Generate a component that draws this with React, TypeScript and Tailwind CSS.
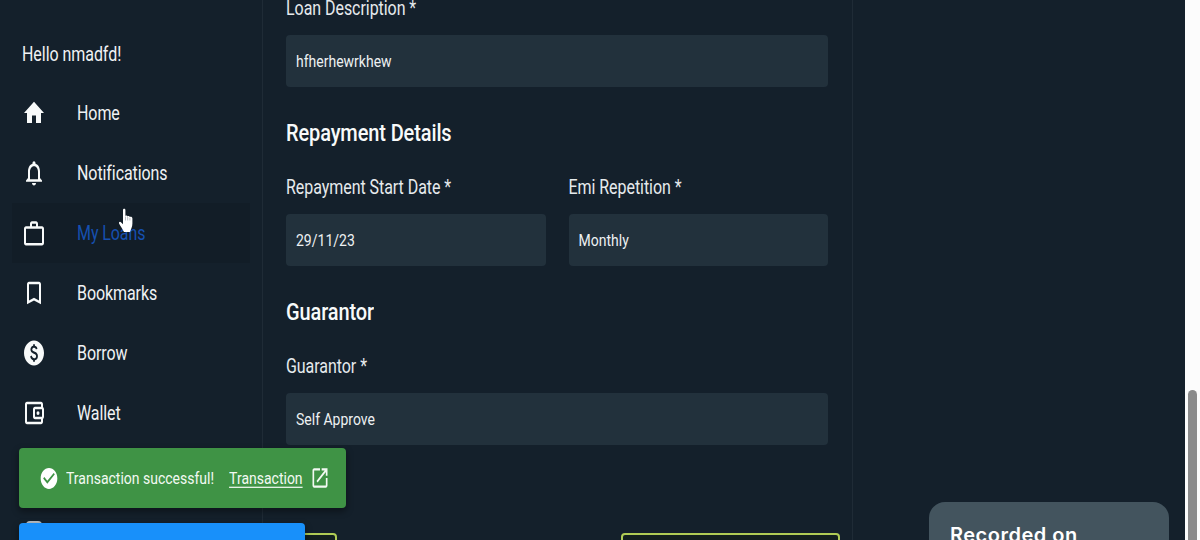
import type { ReactNode } from "react";
import { clsx } from "clsx";

interface NavItem {
  label: string;
  path: string;
  active?: boolean;
}

const NAV_ITEMS: NavItem[] = [
  { label: "Home", path: "M10 20v-6h4v6h5v-8h3L12 3 2 12h3v8z" },
  {
    label: "Notifications",
    path: "M12 22c1.1 0 2-.9 2-2h-4c0 1.1.9 2 2 2zm6-6v-5c0-3.07-1.63-5.64-4.5-6.32V4c0-.83-.67-1.5-1.5-1.5s-1.5.67-1.5 1.5v.68C7.64 5.36 6 7.92 6 11v5l-2 2v1h16v-1l-2-2zm-2 1H8v-6c0-2.48 1.51-4.5 4-4.5s4 2.02 4 4.5v6z",
  },
  {
    label: "My Loans",
    path: "M20 6.500h-4V4.500c0-1.1-.9-2-2-2h-4c-1.1 0-2 .9-2 2v2H4c-1.1 0-2 .9-2 2v11.500c0 1.1.9 2 2 2h16c1.1 0 2-.9 2-2V8.500c0-1.1-.9-2-2-2zM10 4.500h4v2h-4v-2zm10 15.500H4V8.500h16V20z",
    active: true,
  },
  {
    label: "Bookmarks",
    path: "M17 3H7c-1.1 0-2 .9-2 2v16l7-3 7 3V5c0-1.1-.9-2-2-2zm0 15-5-2.18L7 18V5h10v13z",
  },
  {
    label: "Borrow",
    path: "M12 2C6.48 2 2 6.48 2 12s4.48 10 10 10 10-4.48 10-10S17.52 2 12 2zm.88 15.76V19h-1.75v-1.29c-.74-.18-2.39-.77-3.02-2.96l1.65-.67c.06.22.58 2.09 2.4 2.09.93 0 1.98-.48 1.98-1.61 0-.96-.7-1.46-2.28-2.03-1.1-.39-3.35-1.03-3.35-3.31 0-.1.01-2.4 2.62-2.96V5h1.75v1.24c1.84.32 2.51 1.79 2.66 2.23l-1.58.67c-.11-.35-.59-1.34-1.9-1.34-.7 0-1.81.37-1.81 1.39 0 .95.86 1.31 2.64 1.9 2.4.83 3.01 2.05 3.01 3.45 0 2.63-2.5 3.13-3.02 3.22z",
  },
  {
    label: "Wallet",
    path: "M21 7.28V5c0-1.1-.9-2-2-2H5c-1.11 0-2 .9-2 2v14c0 1.1.89 2 2 2h14c1.1 0 2-.9 2-2v-2.28c.59-.35 1-.98 1-1.72V9c0-.74-.41-1.37-1-1.72zM20 9v6h-7V9h7zM5 19V5h14v2h-6c-1.1 0-2 .9-2 2v6c0 1.1.9 2 2 2h6v2H5z M16 10.5a1.5 1.5 0 1 0 0 3 1.5 1.5 0 0 0 0-3z",
  },
];

function Icon({ path, className }: { path: string; className?: string }) {
  return (
    <svg viewBox="0 0 24 24" preserveAspectRatio="none" fill="currentColor" className={clsx("shrink-0", className)}>
      <path d={path} />
    </svg>
  );
}

function Tall({ children, className }: { children: ReactNode; className?: string }) {
  return (
    <span className={clsx("inline-block origin-center scale-y-[1.24] whitespace-nowrap", className)}>{children}</span>
  );
}

function Field({ label, value }: { label: string; value: string }) {
  return (
    <div className="flex flex-1 flex-col gap-3.5">
      <label className="flex h-6 items-center">
        <Tall className="text-base tracking-[-0.05px] text-[#e6eaed]">{label}</Tall>
      </label>
      <div className="flex h-[52px] items-center rounded bg-[#22313c] px-2.5">
        <Tall className="text-sm text-[#edf0f2]">{value}</Tall>
      </div>
    </div>
  );
}

function SectionTitle({ children }: { children: ReactNode }) {
  return (
    <h2 className="flex h-8 items-center text-xl font-medium tracking-[-0.12px] text-[#f8fafa]">
      <Tall>{children}</Tall>
    </h2>
  );
}

function Sidebar() {
  return (
    <aside className="w-[263px] shrink-0 border-r border-[#1f2b36] pt-[39px]">
      <div className="flex h-8 items-center pl-[22px] text-base tracking-[-0.05px] text-[#f0f2f4]">
        <Tall>Hello nmadfd!</Tall>
      </div>
      <nav className="mt-3 mr-3 ml-3 flex flex-col">
        {NAV_ITEMS.map((item) => (
          <a
            key={item.label}
            className={clsx("flex h-[60px] items-center gap-[31px] pl-2.5", item.active && "bg-[#121d27]")}
          >
            <Icon path={item.path} className="h-[30px] w-6 text-[#f8fafa]" />
            <Tall
              className={clsx("pt-px text-base tracking-[-0.08px]", item.active ? "text-[#1650b0]" : "text-[#f0f2f4]")}
            >
              {item.label}
            </Tall>
          </a>
        ))}
      </nav>
    </aside>
  );
}

function Toasts() {
  return (
    <div className="absolute top-[448px] left-[19px] flex flex-col items-start gap-[15px]">
      <div className="flex h-[60px] w-[326.5px] items-center rounded bg-[#3f9345] pl-[19.5px] text-sm text-[#f2f9f2] shadow-[0_3px_6px_1px_rgba(0,0,0,0.35)]">
        <Icon
          path="M12 2C6.5 2 2 6.5 2 12s4.500 10 10 10 10-4.500 10-10S17.500 2 12 2zM10 17l-5-5 1.400-1.400 3.600 3.600 7.600-7.600L19 8l-9 9z"
          className="h-[25px] w-5 text-white"
        />
        <Tall className="ml-[7.5px]">Transaction successful!</Tall>
        <Tall className="ml-[15px] underline underline-offset-2">Transaction</Tall>
        <Icon
          path="M19 19H5V5h7V3H5c-1.11 0-2 .9-2 2v14c0 1.1.89 2 2 2h14c1.1 0 2-.9 2-2v-7h-2v7zM14 3v2h3.59l-9.83 9.83 1.41 1.41L19 6.41V10h2V3h-7z"
          className="ml-[7.5px] h-[26px] w-5"
        />
      </div>
      <div className="h-[60px] w-[285.5px] rounded bg-[#1890fa] shadow-[0_3px_6px_1px_rgba(0,0,0,0.35)]" />
    </div>
  );
}

export default function App() {
  return (
    <div className="relative flex h-[540px] w-[1200px] overflow-hidden bg-[#14202b] font-['Roboto',sans-serif]">
      <Sidebar />
      <main className="-mt-[3px] flex w-[590px] shrink-0 flex-col border-r border-[#1f2b36] pr-6 pl-[23px]">
        <div className="flex">
          <Field label="Loan Description *" value="hfherhewrkhew" />
        </div>
        <div className="mt-[29px]">
          <SectionTitle>Repayment Details</SectionTitle>
        </div>
        <div className="mt-7 flex gap-[23px]">
          <Field label="Repayment Start Date *" value="29/11/23" />
          <Field label="Emi Repetition *" value="Monthly" />
        </div>
        <div className="mt-[29px]">
          <SectionTitle>Guarantor</SectionTitle>
        </div>
        <div className="mt-7 flex">
          <Field label="Guarantor *" value="Self Approve" />
        </div>
        <div className="mt-[88px] -mr-3 flex justify-between">
          <div className="h-12 w-[51px] rounded border-2 border-[#b0cc55] bg-[#13201f]" />
          <div className="h-12 w-[219px] rounded border-2 border-[#b0cc55] bg-[#13201f]" />
        </div>
      </main>
      <div className="flex-1" />
      <div className="w-[15px] shrink-0 bg-[#fcfcfc] pt-[390px]">
        <div className="ml-[3px] h-[200px] w-[9px] rounded-full bg-[#8b8b8b]" />
      </div>

      {/* top edge of the nav icon hidden behind the toasts */}
      <div className="absolute top-[521px] left-[26px] h-2 w-4 rounded-t-sm bg-[#b9bfc5]" />
      <Toasts />
      <div className="absolute top-[502px] left-[929px] h-16 w-60 rounded-2xl bg-[#43545e] pt-[18px] pl-[21px] font-['Inter',sans-serif] text-[20px] font-semibold tracking-[0.5px] text-white">
        Recorded on
      </div>

      <svg viewBox="0 0 16 26" className="absolute top-[208px] left-[118px] h-[26px] w-4">
        <path
          d="M5 2c0-1.6 2.4-1.6 2.4 0v6c.8-.8 2-.6 2.2.5.8-.7 2-.4 2.2.6 1-.6 2.6-.1 2.6 1.5v5c0 4-1.6 5.500-2.400 8.400H6C4.600 21 2.200 18 1.200 15.800c-.8-1.800.8-2.600 2-1.400L5 16.200z"
          fill="#fff"
        />
        <path d="M7.500 8.500v4M9.700 9v3.500M11.900 9.800v2.700" stroke="#77818a" strokeWidth="0.500" />
      </svg>
    </div>
  );
}
